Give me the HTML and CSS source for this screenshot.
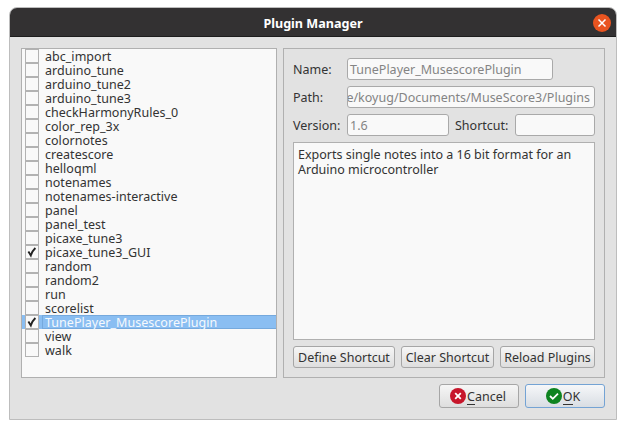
FILE: index.html
```
<!DOCTYPE html>
<html lang="en">
<head>
<meta charset="utf-8">
<title>Plugin Manager</title>
<link rel="stylesheet" href="styles.css">
</head>
<body>
<main class="window">
  <header class="titlebar">
    <h1>Plugin Manager</h1>
    <svg class="close" viewBox="0 0 18 18"><circle cx="9" cy="9" r="9" fill="#e95420"/><path d="M5.5 5.5l7 7M12.5 5.5l-7 7" stroke="#fff" stroke-width="1.5"/></svg>
  </header>
  <div class="content">
    <ul class="plugins">
      <li><i class="box"></i><span>abc_import</span></li>
      <li><i class="box"></i><span>arduino_tune</span></li>
      <li><i class="box"></i><span>arduino_tune2</span></li>
      <li><i class="box"></i><span>arduino_tune3</span></li>
      <li><i class="box"></i><span>checkHarmonyRules_0</span></li>
      <li><i class="box"></i><span>color_rep_3x</span></li>
      <li><i class="box"></i><span>colornotes</span></li>
      <li><i class="box"></i><span>createscore</span></li>
      <li><i class="box"></i><span>helloqml</span></li>
      <li><i class="box"></i><span>notenames</span></li>
      <li><i class="box"></i><span>notenames-interactive</span></li>
      <li><i class="box"></i><span>panel</span></li>
      <li><i class="box"></i><span>panel_test</span></li>
      <li><i class="box"></i><span>picaxe_tune3</span></li>
      <li><i class="box"><svg viewBox="0 0 12 12"><path d="M2.4 5.6L4.8 9.4Q6.2 5 9.4 2" /></svg></i><span>picaxe_tune3_GUI</span></li>
      <li><i class="box"></i><span>random</span></li>
      <li><i class="box"></i><span>random2</span></li>
      <li><i class="box"></i><span>run</span></li>
      <li><i class="box"></i><span>scorelist</span></li>
      <li class="selected"><i class="box"><svg viewBox="0 0 12 12"><path d="M2.4 5.6L4.8 9.4Q6.2 5 9.4 2" /></svg></i><span>TunePlayer_MusescorePlugin</span></li>
      <li><i class="box"></i><span>view</span></li>
      <li><i class="box"></i><span>walk</span></li>
    </ul>
    <section class="details">
      <div class="row"><span class="label">Name:</span><div class="field name"><span>TunePlayer_MusescorePlugin</span></div></div>
      <div class="row"><span class="label">Path:</span><div class="field path"><span>e/koyug/Documents/MuseScore3/Plugins</span></div></div>
      <div class="row"><span class="label">Version:</span><div class="field version"><span>1.6</span></div><span class="label shortcut-label">Shortcut:</span><div class="field shortcut"></div></div>
      <div class="description">Exports single notes into a 16 bit format for an<br>Arduino microcontroller</div>
      <div class="actions">
        <button class="define">Define Shortcut</button>
        <button class="clear">Clear Shortcut</button>
        <button class="reload">Reload Plugins</button>
      </div>
    </section>
  </div>
  <footer class="footer">
    <button class="cancel"><svg viewBox="0 0 16 16"><circle cx="8" cy="8" r="8" fill="#c7162b"/><path d="M5.2 5.2l5.6 5.6M10.8 5.2l-5.6 5.6" stroke="#fff" stroke-width="1.8" fill="none"/></svg><span><span class="key">C</span>ancel</span></button>
    <button class="ok"><svg viewBox="0 0 16 16"><circle cx="8" cy="8" r="8" fill="#0e8420"/><path d="M4 8l2.8 2.8L12 5.6" stroke="#fff" stroke-width="1.8" fill="none"/></svg><span><span class="key">O</span>K</span></button>
  </footer>
</main>
</body>
</html>
```
FILE: styles.css
```
* { box-sizing: border-box; }
body {
  margin: 0;
  padding: 7px 9px;
  background: #fff;
  color: #333;
  font: 12.5px/14px "Noto Sans", sans-serif;
  white-space: nowrap;
}
.window {
  width: 608px;
  height: 413px;
  border: 1px solid #bdbdbd;
  border-radius: 8px 8px 0 0;
  background: #e2e2e2;
  overflow: hidden;
}
.titlebar {
  display: grid;
  grid-template-columns: 23px 1fr 23px;
  align-items: center;
  height: 29px;
  background: #333132;
  border-bottom: 1px solid #1d1d1d;
}
.titlebar h1 {
  grid-column: 2;
  margin: 1px 0 0;
  text-align: center;
  color: #fff;
  font-size: 12.6px;
  line-height: 29px;
}
.close { width: 18px; height: 18px; }
.content {
  display: flex;
  gap: 6px;
  padding: 11px 11px 0;
}
.plugins {
  width: 256px;
  height: 330px;
  margin: 0;
  padding: 0;
  border: 1px solid #b0b0b0;
  background: #f9f9f9;
  list-style: none;
}
.plugins li {
  display: flex;
  height: 14px;
  padding-left: 3px;
}
.plugins li > span {
  flex: 1;
  margin-left: 3px;
  padding-left: 3px;
  line-height: 16px;
  letter-spacing: 0.03px;
}
.box {
  width: 14px;
  height: 14px;
  border: 1px solid #b2b2b2;
  background: #f9f9f9;
}
.box svg { display: block; width: 12px; height: 12px; }
.box path { fill: none; stroke: #222; stroke-width: 1.9; }
.plugins .selected { background: #8abef2; color: #f5f9fd; }
.plugins .selected > span {
  border-left: 1px solid #75a9dd;
  padding-left: 2px;
  box-shadow: inset 0 1px #75a9dd, inset 0 -1px #75a9dd;
}
.details {
  display: flex;
  flex-direction: column;
  gap: 6px;
  width: 322px;
  height: 330px;
  padding: 9px;
  border: 1px solid #b0b0b0;
}
.row { display: flex; height: 22px; line-height: 21px; }
.label { width: 54px; line-height: 23px; }
.shortcut-label { width: 60px; margin-left: 6px; }
.field {
  height: 22px;
  padding: 0 2px;
  border: 1px solid #a9a9a9;
  border-radius: 3px;
  background: #f9f9f9;
  color: #848484;
  overflow: hidden;
}
.name { width: 206px; }
.path { display: flex; justify-content: flex-end; width: 248px; padding: 0 4px 0 0; }
.version { width: 102px; }
.shortcut { width: 80px; }
.description {
  height: 198px;
  padding: 4px;
  border: 1px solid #b0b0b0;
  background: #f9f9f9;
  line-height: 15px;
}
.actions { display: flex; gap: 6px; }
button {
  display: flex;
  align-items: center;
  justify-content: center;
  height: 22px;
  padding: 2px 0 0;
  border: 1px solid #a6a6a6;
  border-radius: 3px;
  background: linear-gradient(#f6f6f6, #dedede);
  color: #333;
  font: inherit;
}
.define { width: 102px; }
.clear { width: 93px; }
.reload { width: 95px; }
.footer {
  display: flex;
  justify-content: flex-end;
  gap: 6px;
  padding: 6px 11px 0;
}
.footer button { width: 80px; height: 24px; padding: 0 2px 0 0; gap: 1px; }
.footer button > span { padding-top: 3px; }
.footer .ok { padding-right: 4px; }
.footer svg { width: 16px; height: 16px; }
.footer .ok {
  border-color: #74a3d4;
  background: linear-gradient(#f6f7f9, #d8dde3);
}
.key { display: inline-block; height: 15px; border-bottom: 1px solid #333; }
```
